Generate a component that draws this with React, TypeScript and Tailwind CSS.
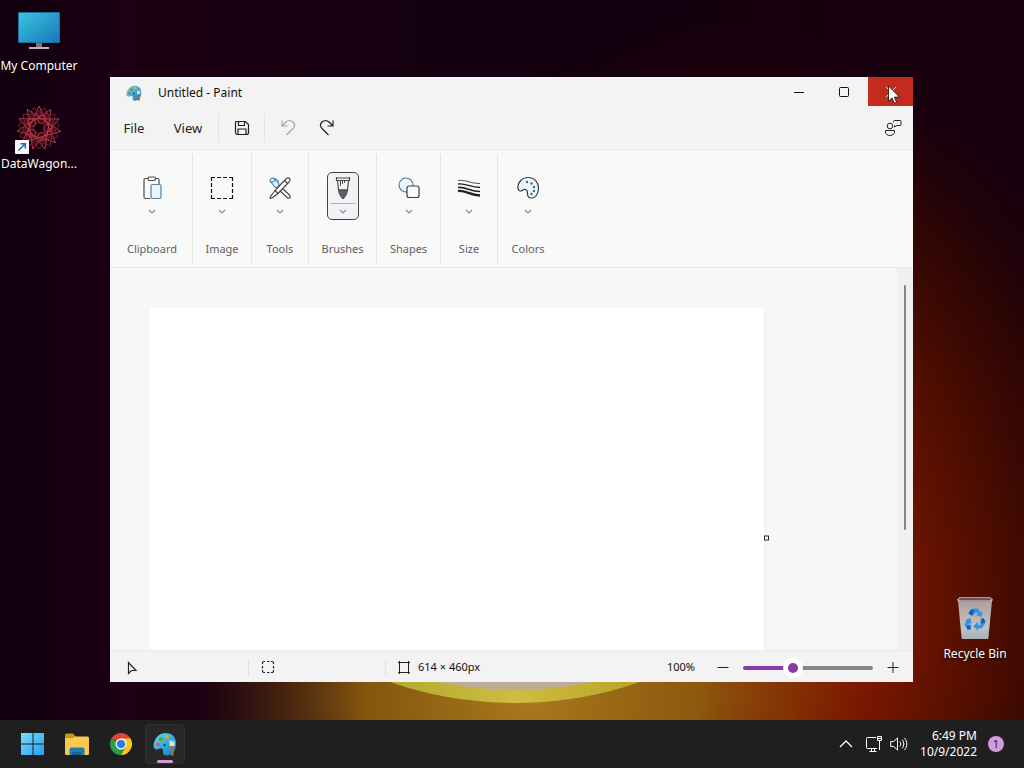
import React, { useState } from "react";

type IconProps = { className?: string };

type DesktopItemProps = {
  label: string;
  children: React.ReactNode;
};

const Wallpaper = () => (
  <svg
    className="absolute inset-0 h-full w-full"
    viewBox="0 0 1024 720"
    preserveAspectRatio="xMidYMid slice"
    aria-hidden="true"
  >
    <defs>
      <radialGradient id="red" cx="0.5" cy="0.5" r="0.5">
        <stop offset="0" stopColor="#a03000" />
        <stop offset="0.35" stopColor="#781700" />
        <stop offset="0.6" stopColor="#4c0d00" />
        <stop offset="0.8" stopColor="#300604" stopOpacity="0.8" />
        <stop offset="1" stopColor="#16000f" stopOpacity="0" />
      </radialGradient>
      <radialGradient id="amber" cx="0.5" cy="0.5" r="0.5">
        <stop offset="0" stopColor="#a87a1c" />
        <stop offset="0.5" stopColor="#8e5f10" stopOpacity="0.9" />
        <stop offset="1" stopColor="#6a3c06" stopOpacity="0" />
      </radialGradient>
      <linearGradient id="night" x1="0" y1="0" x2="1" y2="0">
        <stop offset="0" stopColor="#10000f" />
        <stop offset="0.12" stopColor="#1c0013" />
        <stop offset="0.5" stopColor="#130010" />
        <stop offset="1" stopColor="#1a000d" />
      </linearGradient>
      <linearGradient id="ring" x1="0" y1="0" x2="1" y2="0">
        <stop offset="0.3" stopColor="#b4ac30" />
        <stop offset="0.5" stopColor="#cdbd42" />
        <stop offset="0.7" stopColor="#bba62a" />
      </linearGradient>
    </defs>
    <rect width="1024" height="720" fill="url(#night)" />
    <ellipse cx="730" cy="610" rx="440" ry="600" fill="url(#red)" />
    <ellipse cx="530" cy="700" rx="330" ry="280" fill="url(#amber)" />
    <ellipse cx="515" cy="500" rx="282" ry="203" fill="url(#ring)" />
    <ellipse cx="515" cy="500" rx="268" ry="190" fill="#bcac98" />
  </svg>
);

const ComputerIcon = () => (
  <svg width="44" height="44" viewBox="0 0 44 44" aria-hidden="true">
    <defs>
      <linearGradient id="screen" x1="0" y1="0" x2="1" y2="1">
        <stop offset="0" stopColor="#3cc4de" />
        <stop offset="1" stopColor="#1678bd" />
      </linearGradient>
    </defs>
    <path d="M19 35h6v5h-6z" fill="#77757b" />
    <path d="M12 39h20v2H12z" fill="#b9b4b9" />
    <rect x="1" y="4" width="42" height="31" rx="1" fill="#1b6d9b" />
    <rect x="2" y="5" width="40" height="29" fill="url(#screen)" />
  </svg>
);

const starPath = (points: number, step: number, radius: number, turn = 0) => {
  const coords = Array.from({ length: points }, (_, i) => {
    const angle = ((i * step) / points) * Math.PI * 2 + turn;
    return `${(22 + radius * Math.cos(angle)).toFixed(2)} ${(
      22 +
      radius * Math.sin(angle)
    ).toFixed(2)}`;
  });
  return `M${coords.join("L")}Z`;
};

const DataWagonIcon = () => (
  <span className="relative block h-11 w-11">
    <svg width="44" height="44" viewBox="0 0 44 44" fill="none" aria-hidden="true">
      <circle cx="22" cy="22" r="15" fill="#3a0a14" />
      <g stroke="#c94353" strokeWidth="0.9">
        <path d={starPath(11, 4, 22, 0.15)} />
        <path d={starPath(11, 3, 21, 0.43)} stroke="#7d2230" />
        {[0, 1, 2, 3, 4].map((i) => (
          <circle
            key={i}
            cx={22 + 9 * Math.cos((i / 5) * Math.PI * 2)}
            cy={22 + 9 * Math.sin((i / 5) * Math.PI * 2)}
            r="4"
            stroke="#b03a48"
          />
        ))}
      </g>
      <circle cx="22" cy="22" r="4" fill="#15000f" />
    </svg>
    <svg
      className="absolute -bottom-1 -left-0.5"
      width="14"
      height="14"
      viewBox="0 0 14 14"
      aria-hidden="true"
    >
      <rect width="14" height="14" rx="1" fill="#f7f7f7" />
      <path d="M3.5 10.5 10 4M5.5 3.7h4.800v4.800" stroke="#1a6fc4" strokeWidth="1.6" fill="none" />
    </svg>
  </span>
);

const RecycleBinIcon = () => (
  <svg width="42" height="44" viewBox="2 0 40 46" aria-hidden="true">
    <defs>
      <linearGradient id="bin" x1="0" y1="0" x2="0" y2="1">
        <stop offset="0" stopColor="#a79c9b" />
        <stop offset="0.75" stopColor="#c9c1c0" />
        <stop offset="0.8" stopColor="#b4bcc4" />
        <stop offset="1" stopColor="#aab0b8" />
      </linearGradient>
    </defs>
    <path d="M4 3 6 1h32l2 2-4 41a1 1 0 0 1-1 1H9a1 1 0 0 1-1-1z" fill="url(#bin)" />
    <path d="M5 3.500 7 2h30l2 1.500-1.500 2h-31z" fill="#6b5553" />
    <path d="M4 3v2h36V3" fill="none" stroke="#cfc5c3" strokeWidth="0.8" />
    <g fill="#2f95e0">
      <path d="m15 18 4-5h6l3 4 2-1-1 6-6-2 2-1-2-2-3 3z" />
      <path d="m31 23 2 5-4 6h-4v2l-5-4 5-5v3h3l-1-3z" />
      <path d="m12 25 5-2 2 6-2-1-1 2h2v5h-4l-3-5 2-4z" />
    </g>
    <path d="m15 18 3-4 3 1-2 6zM28 24l3-1 2 4-4 2zM13 31h4v4h-3z" fill="#1261b5" />
  </svg>
);

const PaintIcon = ({ className }: IconProps) => (
  <svg className={className} viewBox="0 0 24 24" aria-hidden="true">
    <defs>
      <linearGradient id="palette" x1="0" y1="0" x2="1" y2="1">
        <stop offset="0" stopColor="#6fdcf0" />
        <stop offset="0.6" stopColor="#2fa3d8" />
        <stop offset="1" stopColor="#1671b8" />
      </linearGradient>
    </defs>
    <path
      d="M13 1c6 0 10 4 10 10 0 7-3 12-8.500 12.500C11 23.800 9.500 22 10 19.500c.5-2-.5-3.500-2.500-3-2 .5-3.500 1.500-5.500.5C0 15.500.5 12 1.500 9.500 3.500 4 7.500 1 13 1z"
      fill="url(#palette)"
    />
    <circle cx="5" cy="12.500" r="1.900" fill="#d8604a" />
    <circle cx="8" cy="7" r="2.200" fill="#5aa83c" />
    <circle cx="14" cy="4.800" r="2" fill="#e8a838" />
    <circle cx="11.500" cy="13" r="1.300" fill="#134c80" />
    <path d="M16.500 8.500 17.500 8v2l1-2 1 2 1-2v2l1-1.500V14h-5z" fill="#e6dccd" />
    <path d="M17.500 14h3.500l-.4 8.500a1.300 1.300 0 0 1-2.600 0z" fill="#a9703b" />
  </svg>
);

const SaveIcon = () => (
  <svg width="16" height="16" viewBox="0 0 16 16" fill="none" stroke="#222" aria-hidden="true">
    <path d="M2.500 1.500h9l3 3v8a2 2 0 0 1-2 2h-9a2 2 0 0 1-2-2v-10a1 1 0 0 1 1-1z" strokeWidth="1.200" />
    <path d="M4.500 1.500v4h6v-4M4 14.500V9h8v5.500" strokeWidth="1.200" />
  </svg>
);

const UndoIcon = () => (
  <svg width="16" height="18" viewBox="0 0 16 18" fill="none" stroke="#a3a3a3" aria-hidden="true">
    <path d="M2 1.500v5.500h5.500M2 7l4-4c2-2 5-2 7 0s2 4.500 0 6.500L6.500 16" strokeWidth="1.100" />
  </svg>
);

const RedoIcon = () => (
  <svg width="16" height="18" viewBox="0 0 16 18" fill="none" stroke="#222" aria-hidden="true">
    <path d="M14 1.500v5.500H8.500M14 7l-4-4C8 1 5 1 3 3S1 7.500 3 9.500L9.500 16" strokeWidth="1.200" />
  </svg>
);

const FeedbackIcon = () => (
  <svg width="18" height="18" viewBox="0 0 18 18" fill="none" stroke="#222" aria-hidden="true">
    <circle cx="6" cy="7" r="2.800" />
    <path d="M1.500 11.500h9v1.500c0 2-2 3.500-4.500 3.500S1.500 15 1.500 13z" />
    <path d="M9.500 3.500v-1a1 1 0 0 1 1-1H16a1 1 0 0 1 1 1v3a1 1 0 0 1-1 1h-3l-2.500 1.500V6.500" />
  </svg>
);

const ChevronIcon = () => (
  <svg width="8" height="5" viewBox="0 0 8 5" fill="none" stroke="#8a8a8a" aria-hidden="true">
    <path d="m1 1 3 3 3-3" strokeWidth="1.200" />
  </svg>
);

const ClipboardIcon = () => (
  <svg width="24" height="24" viewBox="0 0 24 24" fill="none" stroke="#4a4a4a" aria-hidden="true">
    <path d="M8 2.500H5.500a1.500 1.500 0 0 0-1.500 1.500v17a1.500 1.500 0 0 0 1.500 1.500H10M15 2.500h2.500A1.500 1.500 0 0 1 19 4v4" strokeWidth="1.200" />
    <rect x="8" y="1" width="7.500" height="3.500" rx="1.500" fill="#fafafa" strokeWidth="1.200" />
    <rect x="11" y="8.500" width="10" height="14" rx="1.500" stroke="#4d83ad" fill="#e9f4fc" strokeWidth="1.200" />
  </svg>
);

const ImageIcon = () => (
  <svg width="24" height="24" viewBox="0 0 24 24" fill="none" stroke="#111" aria-hidden="true">
    <path
      d="M1.500 5V1.500H5M7 1.500h4M13 1.500h4M19 1.500h3.500V5M22.500 7v4M22.500 13v4M22.500 19v3.500H19M17 22.500h-4M11 22.500H7M5 22.500H1.500V19M1.500 17v-4M1.500 11V7"
      strokeWidth="1.200"
    />
  </svg>
);

const ToolsIcon = () => (
  <svg width="24" height="24" viewBox="0 0 24 24" fill="none" stroke="#444" strokeWidth="1.100" aria-hidden="true">
    <path d="m10.500 9 10 9c1.500 1.500 2 3 1.500 4-1 .5-2.500 0-4-1.500L8 11" fill="#fafafa" />
    <path d="M2 5c0-2 1.500-3 3.500-3L11 8c0 2-1.500 3.500-3.500 3.500z" stroke="#4284b5" fill="#e5f2fb" />
    <path d="M6 2.200c2 .5 4 1 4.500 4M2 5.500c3 1 4 .5 5-2.500" stroke="#4284b5" />
    <path d="m14 7 4-4c1-1 2.500-1.500 3.500-.5s.5 2.500-.5 3.500L10 17.500 6 20.500c-1.500 1.500-2.500 2-4 2 0-1.500.5-2.500 2-4l3-4z" fill="#fafafa" />
    <path d="m16.500 4.500 3 3M7 14.500l3 3" />
  </svg>
);

const BrushIcon = () => (
  <svg width="24" height="24" viewBox="0 0 24 24" fill="none" stroke="#4a4a4a" aria-hidden="true">
    <path d="M5.500 1v3.500h13V1M5.500 2h13M6.500 4.500l1 9.500h9l1-9.500" strokeWidth="1.200" />
    <path d="M9.500 4.500V10M11.500 4.500V8M13.500 4.500V7" />
    <path d="M7.500 14h9c-.5 4-2 6.500-4.500 9-2.500-2.500-4-5-4.500-9z" fill="#606060" />
  </svg>
);

const ShapesIcon = () => (
  <svg width="24" height="24" viewBox="0 0 24 24" fill="none" aria-hidden="true">
    <circle cx="9" cy="9" r="7" stroke="#47779c" strokeWidth="1.100" fill="#eef6fc" />
    <rect x="10" y="10" width="12" height="11.500" rx="2" stroke="#3c3c3c" strokeWidth="1.200" fill="#fafafa" />
  </svg>
);

const SizeIcon = () => (
  <svg width="24" height="24" viewBox="0 0 24 24" fill="none" stroke="#222" aria-hidden="true">
    <path d="M1 4.500c8-1 12 3 22 3" strokeWidth="0.800" />
    <path d="M1 8c8-1 12 3.500 22 3.500" strokeWidth="1.300" />
    <path d="M1 11.500c8-1 12 4 22 4" strokeWidth="1.600" />
    <path d="M1 15c8-1 12 4.500 22 4.500" strokeWidth="2.300" />
  </svg>
);

const ColorsIcon = () => (
  <svg width="24" height="24" viewBox="0 0 24 24" aria-hidden="true">
    <path
      d="M2 13C1 7 6 1.500 12 1.500c6.500 0 10.500 5 10.500 10.500 0 6-3 10-7 10-3 0-4-2-4-4.500 0-2 0-3.500-2-4-2.500-.5-3 1.500-5 1.500-1.500 0-2.200-.8-2.500-2z"
      fill="#f0f7fc"
      stroke="#3a3a3a"
      strokeWidth="1.200"
    />
    <g fill="#2e6f9c">
      <circle cx="11" cy="6" r="1.200" />
      <circle cx="15.500" cy="7.500" r="1.200" />
      <circle cx="18" cy="11" r="1.200" />
      <circle cx="18" cy="15" r="1.200" />
      <circle cx="15.500" cy="18" r="1.200" />
    </g>
  </svg>
);

const groups = [
  { label: "Clipboard", icon: <ClipboardIcon />, width: "w-[81px]" },
  { label: "Image", icon: <ImageIcon />, width: "w-[59px]" },
  { label: "Tools", icon: <ToolsIcon />, width: "w-[57px]" },
  { label: "Brushes", icon: <BrushIcon />, width: "w-[68px]", active: true },
  { label: "Shapes", icon: <ShapesIcon />, width: "w-[64px]" },
  { label: "Size", icon: <SizeIcon />, width: "w-[57px]" },
  { label: "Colors", icon: <ColorsIcon />, width: "w-[60px]" },
];

const DesktopItem = ({ label, children }: DesktopItemProps) => (
  <button className="flex w-20 flex-col items-center gap-1.5 text-xs leading-4 text-white text-shadow-[0_1px_2px_#000]">
    {children}
    <span className="whitespace-nowrap">{label}</span>
  </button>
);

const TitleBar = () => (
  <header className="flex h-8 shrink-0 items-center justify-between">
    <div className="flex items-center gap-4 pl-4">
      <PaintIcon className="h-4 w-4" />
      <h1 className="text-xs">Untitled - Paint</h1>
    </div>
    <div className="flex h-[29px] self-start">
      <button className="grid w-[45px] place-items-center" aria-label="Minimize">
        <svg width="10" height="10" viewBox="0 0 10 10" aria-hidden="true">
          <path d="M0 5.500h10" stroke="#111" />
        </svg>
      </button>
      <button className="mr-0.5 grid w-[45px] place-items-center" aria-label="Maximize">
        <svg width="10" height="10" viewBox="0 0 10 10" aria-hidden="true">
          <rect x="0.500" y="0.500" width="9" height="9" rx="1" fill="none" stroke="#111" />
        </svg>
      </button>
      <button className="relative grid w-[45px] place-items-center bg-[#c42b1c]" aria-label="Close">
        <svg width="10" height="10" viewBox="0 0 10 10" aria-hidden="true">
          <path d="m0 0 10 10M10 0 0 10" stroke="#f3d6d3" />
        </svg>
        {/* mouse pointer resting on the close button */}
        <svg
          className="absolute top-2 left-5"
          width="12"
          height="19"
          viewBox="0 0 12 19"
          aria-hidden="true"
        >
          <path
            d="M.5.8v15.500l3.600-3.400 2.300 5.300 2.200-1-2.300-5.100h5z"
            fill="#fff"
            stroke="#111"
            strokeWidth="0.800"
          />
        </svg>
      </button>
    </div>
  </header>
);

const MenuBar = () => (
  <nav className="flex h-10 shrink-0 items-center pr-[11px] text-[13px] text-[#222]">
    <button className="w-12">File</button>
    <button className="ml-1 w-[52px]">View</button>
    <div className="ml-1 flex flex-1 items-center pb-0.5">
      <div className="flex h-7 items-center border-l border-[#e4e4e4]">
        <button className="grid w-[45px] place-items-center" aria-label="Save">
          <SaveIcon />
        </button>
      </div>
      <div className="flex h-7 items-center border-l border-[#e4e4e4]">
        <button className="grid w-[45px] place-items-center" aria-label="Undo" disabled>
          <UndoIcon />
        </button>
        <button className="grid w-[34px] place-items-center" aria-label="Redo">
          <RedoIcon />
        </button>
      </div>
      <button className="ml-auto" aria-label="Send feedback">
        <FeedbackIcon />
      </button>
    </div>
  </nav>
);

const Ribbon = () => (
  <div className="flex h-[119px] shrink-0 border-y border-[#e7e7e7] bg-[#f9f9f9] py-1 pl-0.5">
    {groups.map((g) => (
      <div
        key={g.label}
        className={`${g.width} flex flex-col items-center justify-between border-r border-[#e5e5e5] pt-[18px] pb-1.5 last:border-r-0`}
      >
        <button
          aria-label={g.label}
          className={`flex h-12 w-8 flex-col items-center rounded-[5px] border pt-[3px] ${
            g.active ? "border-[#44404a] bg-[#f4f2f6]" : "border-transparent"
          }`}
        >
          {g.icon}
          <span
            className={`mt-[3px] flex h-4 w-[26px] items-center justify-center border-t ${
              g.active ? "border-[#b5b5b5]" : "border-transparent"
            }`}
          >
            <ChevronIcon />
          </span>
        </button>
        <span className="text-[11px] leading-4 text-[#606060]">{g.label}</span>
      </div>
    ))}
  </div>
);

const StatusBar = () => {
  const [zoom, setZoom] = useState(36);

  return (
    <footer className="flex h-8 shrink-0 items-center border-t border-[#e9e9e9] bg-[#f3f3f3] pt-0.5 text-[11px] text-[#111]">
      <div className="w-[138px] pl-4">
        <svg width="12" height="14" viewBox="0 0 12 14" fill="none" stroke="#222" aria-hidden="true">
          <path d="M2.500 1.500v11l3-3H10z" strokeWidth="1.200" />
        </svg>
      </div>
      <div className="h-4 w-[137px] border-l border-[#e2e2e2] pl-3">
        <svg width="14" height="14" viewBox="0 1 14 14" fill="none" stroke="#222" aria-hidden="true">
          <path
            d="M1.500 5V4a1.500 1.500 0 0 1 1.500-1.500h1M6 2.500h2.500M10 2.500h1A1.500 1.500 0 0 1 12.500 4v1M12.500 7v2.500M12.500 11v1a1.500 1.500 0 0 1-1.500 1.500h-1M8.500 13.500H6M4 13.500H3A1.500 1.500 0 0 1 1.500 12v-1M1.500 9.500V7"
            strokeWidth="1.200"
          />
        </svg>
      </div>
      <div className="flex h-4 items-center gap-2 border-l border-[#e2e2e2] pl-3">
        <svg width="12" height="13" viewBox="0 0 12 13" fill="none" stroke="#222" aria-hidden="true">
          <path d="M1.500 0v13M10.500 0v13M0 1.500h12M0 11.500h12" />
        </svg>
        <span>614 × 460px</span>
      </div>
      <div className="ml-auto flex items-center pr-3">
        <label htmlFor="zoom">100%</label>
        <button className="ml-5 grid h-5 w-4 place-items-center" aria-label="Zoom out">
          <svg width="12" height="12" viewBox="0 0 12 12" aria-hidden="true">
            <path d="M.5 5.500h11" stroke="#222" />
          </svg>
        </button>
        <input
          id="zoom"
          type="range"
          min={0}
          max={100}
          value={zoom}
          onChange={(e) => setZoom(Number(e.target.value))}
          className="mx-3 h-5 w-[130px] appearance-none bg-transparent [&::-webkit-slider-runnable-track]:h-1 [&::-webkit-slider-runnable-track]:rounded-full [&::-webkit-slider-runnable-track]:bg-[linear-gradient(to_right,#883ba5_38%,#868686_38%)] [&::-webkit-slider-thumb]:-mt-2 [&::-webkit-slider-thumb]:h-5 [&::-webkit-slider-thumb]:w-5 [&::-webkit-slider-thumb]:appearance-none [&::-webkit-slider-thumb]:rounded-full [&::-webkit-slider-thumb]:border-[5px] [&::-webkit-slider-thumb]:border-white [&::-webkit-slider-thumb]:bg-[#883ba5]"
        />
        <button className="grid h-5 w-4 place-items-center" aria-label="Zoom in">
          <svg width="12" height="12" viewBox="0 0 12 12" aria-hidden="true">
            <path d="M.5 5.500h11M6 0v11" stroke="#222" />
          </svg>
        </button>
      </div>
    </footer>
  );
};

const PaintWindow = () => (
  <section className="absolute top-[77px] right-[111px] bottom-[38px] left-[110px] flex flex-col bg-[#f3f3f3] text-[#111]">
    <TitleBar />
    <MenuBar />
    <Ribbon />
    <div className="flex min-h-0 flex-1 bg-[#f7f7f7]">
      <main className="min-w-0 flex-1 overflow-hidden pt-10 pl-10">
        <div className="relative h-[460px] w-[614px] bg-white shadow-[1px_0_4px_#00000008]">
          <span className="absolute top-1/2 left-full h-[5px] w-[5px] -translate-y-1/2 border border-[#222] bg-white" />
        </div>
      </main>
      <div className="flex w-4 justify-center bg-[#f0f0f0] pt-[17px] pb-[120px]">
        <div className="w-0.5 rounded-full bg-[#868686]" />
      </div>
    </div>
    <StatusBar />
  </section>
);

const StartIcon = () => (
  <svg width="24" height="24" viewBox="0 0 24 24" aria-hidden="true">
    <defs>
      <linearGradient id="start" x1="0" y1="0" x2="24" y2="24" gradientUnits="userSpaceOnUse">
        <stop offset="0" stopColor="#7edcfb" />
        <stop offset="1" stopColor="#1c9df0" />
      </linearGradient>
    </defs>
    <path d="M0 1h11.500v10.500H0zM12.500 1H23v10.500H12.500zM0 12.500h11.500V23H0zM12.500 12.500H23V23H12.500z" fill="url(#start)" />
  </svg>
);

const ExplorerIcon = () => (
  <svg width="26" height="24" viewBox="0 0 26 24" aria-hidden="true">
    <path d="M1 3a1.500 1.500 0 0 1 1.500-1.500H9L12 5v4H1z" fill="#c9940f" />
    <path d="M1 6h8l2-1.500h12.500A1.500 1.500 0 0 1 25 6v15.500a1.500 1.500 0 0 1-1.500 1.500h-21A1.500 1.500 0 0 1 1 21.500z" fill="#f8ca4c" />
    <path d="M5.500 23v-5.500a2 2 0 0 1 2-2h11a2 2 0 0 1 2 2V23z" fill="#1d7fb8" />
    <path d="M8.500 20h9v3h-9z" fill="#175f93" />
  </svg>
);

const ChromeIcon = () => (
  <svg width="24" height="24" viewBox="0 0 24 24" aria-hidden="true">
    <path d="M12 12 2.470 6.500A11 11 0 0 1 21.530 6.500z" fill="#dd4436" />
    <path d="M12 12h-1L2.470 6.500A11 11 0 0 0 12 23l4.760-8.250z" fill="#2a9d4a" />
    <path d="M12 6.500h9.530A11 11 0 0 1 12 23l4.760-8.250z" fill="#fbc816" />
    <circle cx="12" cy="12" r="5.500" fill="#fff" />
    <circle cx="12" cy="12" r="4.300" fill="#2f7de9" />
  </svg>
);

const Taskbar = () => (
  <footer className="relative flex h-12 shrink-0 items-center justify-between bg-[#1f1f1f] pr-5 pl-[13px] text-white">
    <div className="flex items-center gap-1">
      <button className="grid h-10 w-10 place-items-center" aria-label="Start">
        <StartIcon />
      </button>
      <button className="grid h-10 w-10 place-items-center" aria-label="File Explorer">
        <ExplorerIcon />
      </button>
      <button className="grid h-10 w-10 place-items-center" aria-label="Chrome">
        <ChromeIcon />
      </button>
      <button
        className="relative grid h-10 w-10 place-items-center rounded border border-[#303030] bg-[#282828]"
        aria-label="Paint"
      >
        <PaintIcon className="h-6 w-6" />
        <span className="absolute bottom-0 left-1/2 h-[3px] w-4 -translate-x-1/2 rounded-full bg-[#d59adb]" />
      </button>
    </div>
    <div className="flex items-center">
      <button className="mr-3 grid h-8 w-4 place-items-center" aria-label="Show hidden icons">
        <svg width="14" height="8" viewBox="0 0 14 8" fill="none" stroke="#fff" aria-hidden="true">
          <path d="m1 7 6-6 6 6" strokeWidth="1.300" />
        </svg>
      </button>
      <button className="flex items-center gap-2" aria-label="Network and volume">
        <svg width="16" height="16" viewBox="0 0 16 16" fill="none" stroke="#fff" aria-hidden="true">
          <path d="M10 1.500H1.500a1 1 0 0 0-1 1v9a1 1 0 0 0 1 1h9.500M3.500 15.500h7M5.500 12.500v3M8.500 12.500v3" />
          <path d="M11.500.5h4v4h-4zM13.500 4.500v9.500M11.500 2.500h4" />
        </svg>
        <svg width="18" height="16" viewBox="0 0 18 16" fill="none" stroke="#fff" aria-hidden="true">
          <path d="M.7 5.500h3L7.500 2v12l-3.800-3.500h-3z" />
          <path d="M10 5.500c1 1.500 1 3.500 0 5M12.300 3.700c2 2.500 2 6 0 8.600M14.500 2c3 3.500 3 8.500 0 12" />
        </svg>
      </button>
      <time className="ml-3 text-right text-xs whitespace-nowrap">
        6:49 PM
        <br />
        10/9/2022
      </time>
      <span className="ml-[11px] grid h-4 w-4 place-items-center rounded-full bg-[#d59adb] text-[11px] text-[#222]">
        1
      </span>
    </div>
  </footer>
);

const App = () => (
  <div className="flex h-screen flex-col overflow-hidden bg-[#15000f] font-['Noto_Sans','Open_Sans',sans-serif]">
    <div className="relative min-h-0 flex-1">
      <Wallpaper />
      <div className="absolute top-2 left-0 flex -translate-x-px flex-col gap-8">
        <DesktopItem label="My Computer">
          <ComputerIcon />
        </DesktopItem>
        <DesktopItem label="DataWagon...">
          <DataWagonIcon />
        </DesktopItem>
      </div>
      <div className="absolute right-[9px] bottom-[58px]">
        <DesktopItem label="Recycle Bin">
          <RecycleBinIcon />
        </DesktopItem>
      </div>
      <PaintWindow />
    </div>
    <Taskbar />
  </div>
);

export default App;
